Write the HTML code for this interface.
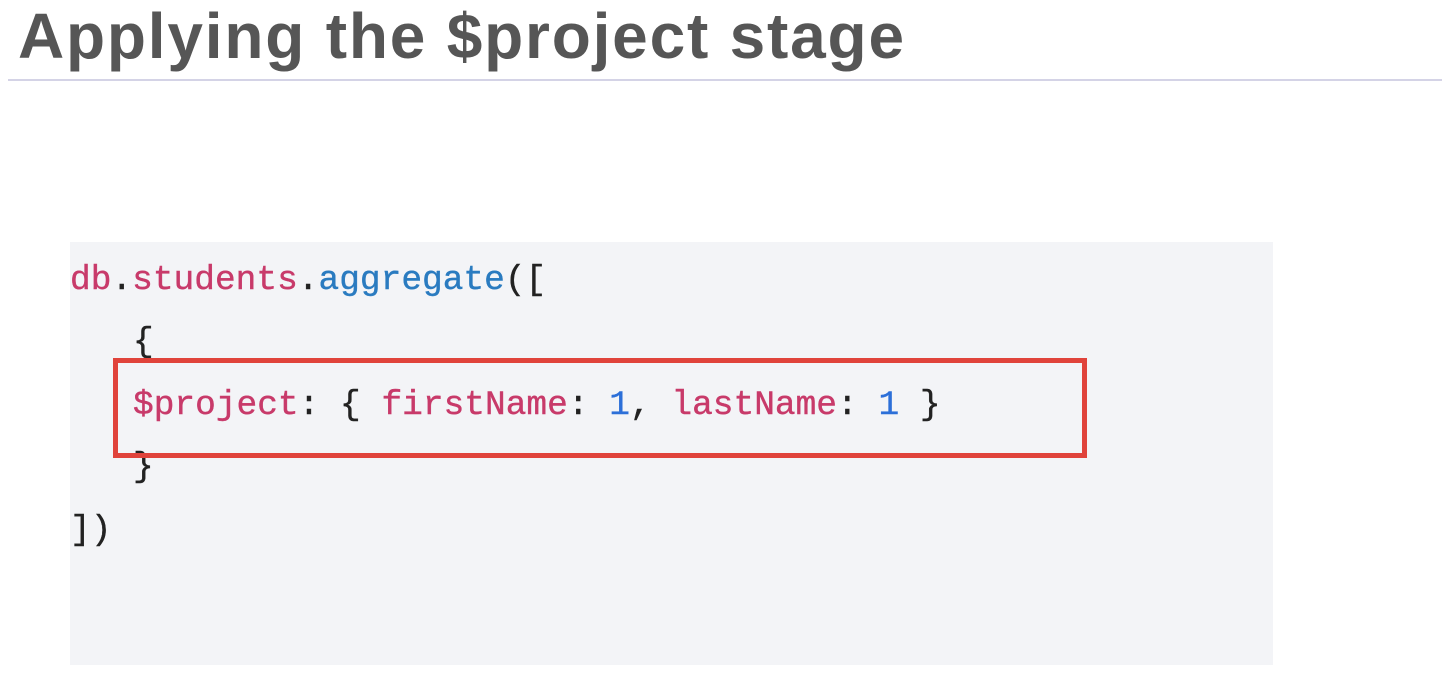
<!DOCTYPE html>
<html><head><style>
body{margin:0;width:1449px;height:679px;background:#fff;position:relative;overflow:hidden;font-family:"Liberation Sans",sans-serif}
.t{position:absolute;left:18px;top:-1px;font-size:64px;font-weight:bold;color:#565656;letter-spacing:1.8px;white-space:nowrap}
.hr{position:absolute;left:8px;top:79px;width:1434px;height:2px;background:#d4d3e6}
.code{position:absolute;left:70px;top:242px;width:1203px;height:423px;background:#f3f4f7}
.l{position:absolute;font-family:"Liberation Mono",monospace;font-size:34.5px;white-space:pre;color:#222;-webkit-text-stroke:0.4px currentColor}
.p{color:#c83a6a}.b{color:#2a7bc0}.n{color:#2c6fd8}
.box{position:absolute;left:113px;top:358px;width:964px;height:90px;border:5px solid #e0433b}
</style></head><body>
<div class="t">Applying the $project stage</div>
<div class="hr"></div>
<div class="code"></div>
<div class="l" style="left:70px;top:261px"><span class="p">db</span>.<span class="p">students</span>.<span class="b">aggregate</span>([</div>
<div class="l" style="left:133px;top:323px">{</div>
<div class="l" style="left:133px;top:386px"><span class="p">$project</span>: { <span class="p">firstName</span>: <span class="n">1</span>, <span class="p">lastName</span>: <span class="n">1</span> }</div>
<div class="l" style="left:133px;top:448px">}</div>
<div class="l" style="left:70px;top:511px">])</div>
<div class="box"></div>
</body></html>
